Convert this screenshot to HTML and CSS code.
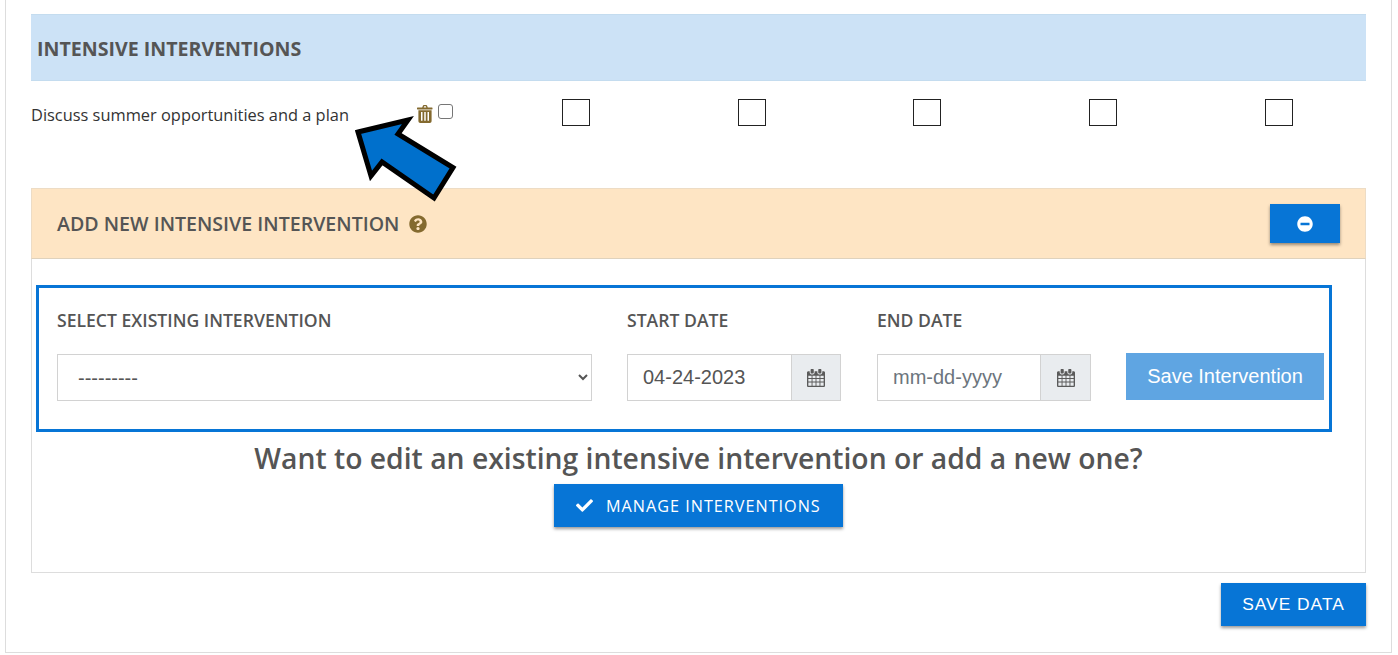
FILE: index.html
```html
<!DOCTYPE html>
<html lang="en">
<head>
    <meta charset="UTF-8">
    <meta name="viewport" content="width=device-width, initial-scale=1.0">
    <title>Intensive Interventions</title>
    <link rel="stylesheet" href="styles.css">
</head>
<body>
    <div class="page-card">
        <h2 class="section-title">INTENSIVE INTERVENTIONS</h2>

        <div class="row-item">
            <div class="row-name">Discuss summer opportunities and a plan</div>
            <div class="row-tools">
                <svg class="icon-trash" viewBox="0 0 16 18">
                    <path fill="#846a2f" fill-rule="evenodd" d="M5.2 2.4 6 .6C6.1.3 6.4 0 6.8 0h2.4c.4 0 .7.3.8.6l.8 1.8h4.2c.3 0 .5.2.5.5v1c0 .3-.2.5-.5.5H.5C.2 4.400 0 4.200 0 3.900v-1c0-.3.2-.5.5-.5zM6.700 2.400h2.600L8.900 1.300H7.100zM1.400 5.200h13.200v10.800c0 1.100-.8 2-1.800 2H3.200c-1 0-1.800-.9-1.800-2zM4 7v8.800h1.500V7zM7.250 7v8.800h1.500V7zM10.500 7v8.800H12V7z"/>
                </svg>
                <input type="checkbox" class="row-check">
            </div>
            <div class="row-boxes">
                <span class="box"></span>
                <span class="box"></span>
                <span class="box"></span>
                <span class="box"></span>
                <span class="box"></span>
            </div>
        </div>

        <div class="add-panel">
            <div class="add-header">
                <h3 class="add-title">ADD NEW INTENSIVE INTERVENTION
                    <svg class="icon-help" viewBox="0 0 512 512"><path fill="#846a2f" d="M504 256c0 136.997-111.043 248-248 248S8 392.997 8 256C8 119.083 119.043 8 256 8s248 111.083 248 248zM262.655 90c-54.497 0-89.255 22.957-116.549 63.758-3.536 5.286-2.353 12.415 2.715 16.258l34.699 26.31c5.205 3.947 12.621 3.008 16.665-2.122 17.864-22.658 30.113-35.797 57.303-35.797 20.429 0 45.698 13.148 45.698 32.958 0 14.976-12.363 22.667-32.534 33.976C247.128 238.528 216 254.941 216 296v4c0 6.627 5.373 12 12 12h56c6.627 0 12-5.373 12-12v-1.333c0-28.462 83.186-29.647 83.186-106.667 0-58.002-60.165-102-116.531-102zM256 338c-25.365 0-46 20.635-46 46 0 25.364 20.635 46 46 46s46-20.636 46-46c0-25.365-20.635-46-46-46z"/></svg>
                </h3>
                <button class="btn btn-collapse" aria-label="Collapse">
                    <svg class="icon-minus" viewBox="0 0 512 512"><path fill="#fff" d="M256 8C119 8 8 119 8 256s111 248 248 248 248-111 248-248S393 8 256 8zM124 296c-6.600 0-12-5.400-12-12v-56c0-6.600 5.400-12 12-12h264c6.600 0 12 5.400 12 12v56c0 6.600-5.400 12-12 12H124z"/></svg>
                </button>
            </div>

            <div class="add-body">
                <form class="add-form">
                    <div class="field field-select">
                        <label for="existing">SELECT EXISTING INTERVENTION</label>
                        <select id="existing" class="control">
                            <option>---------</option>
                        </select>
                    </div>
                    <div class="field field-start">
                        <label for="startDate">START DATE</label>
                        <div class="date-group">
                            <input type="text" id="startDate" class="control date-input" value="04-24-2023">
                            <span class="date-addon">
                                <svg class="icon-cal" viewBox="0 0 20 20"><path fill="#5a5a5a" fill-rule="evenodd" d="M5 0h1.500c.6 0 1 .5 1 1v3c0 .6-.4 1-1 1H5c-.6 0-1-.4-1-1V1c0-.5.4-1 1-1zm8.500 0H15c.6 0 1 .5 1 1v3c0 .6-.4 1-1 1h-1.500c-.6 0-1-.4-1-1V1c0-.5.4-1 1-1zM1.500 2.500H3V4c0 1.200.9 2 2 2h1.500c1.100 0 2-.8 2-2V2.500h3V4c0 1.200.9 2 2 2H15c1.100 0 2-.8 2-2V2.500h1.500c.8 0 1.500.7 1.500 1.500v14.500c0 .8-.7 1.500-1.500 1.500h-17C.7 20 0 19.300 0 18.500V4c0-.8.700-1.500 1.500-1.500zM1.500 7.500v2.600h3.600V7.500zm4.600 0v2.600h3.400V7.500zm4.400 0v2.600h3.400V7.500zm4.400 0v2.600h3.600V7.500zM1.500 11.100v2.800h3.600v-2.800zm4.600 0v2.800h3.400v-2.800zm4.400 0v2.800h3.400v-2.800zm4.400 0v2.800h3.600v-2.800zM1.500 14.900v3.600h3.600v-3.600zm4.600 0v3.600h3.400v-3.600zm4.400 0v3.600h3.400v-3.600zm4.400 0v3.600h3.600v-3.600z"/></svg>
                            </span>
                        </div>
                    </div>
                    <div class="field field-end">
                        <label for="endDate">END DATE</label>
                        <div class="date-group">
                            <input type="text" id="endDate" class="control date-input" placeholder="mm-dd-yyyy">
                            <span class="date-addon date-addon-end">
                                <svg class="icon-cal" viewBox="0 0 20 20"><path fill="#5a5a5a" fill-rule="evenodd" d="M5 0h1.500c.6 0 1 .5 1 1v3c0 .6-.4 1-1 1H5c-.6 0-1-.4-1-1V1c0-.5.4-1 1-1zm8.500 0H15c.6 0 1 .5 1 1v3c0 .6-.4 1-1 1h-1.500c-.6 0-1-.4-1-1V1c0-.5.4-1 1-1zM1.500 2.500H3V4c0 1.200.9 2 2 2h1.500c1.100 0 2-.8 2-2V2.500h3V4c0 1.200.9 2 2 2H15c1.100 0 2-.8 2-2V2.500h1.500c.8 0 1.500.7 1.500 1.500v14.500c0 .8-.7 1.500-1.500 1.500h-17C.7 20 0 19.300 0 18.500V4c0-.8.700-1.500 1.500-1.500zM1.500 7.500v2.600h3.600V7.500zm4.600 0v2.600h3.400V7.500zm4.400 0v2.600h3.400V7.500zm4.400 0v2.600h3.600V7.500zM1.500 11.100v2.800h3.600v-2.800zm4.600 0v2.800h3.400v-2.800zm4.400 0v2.800h3.400v-2.800zm4.400 0v2.800h3.600v-2.800zM1.500 14.900v3.600h3.600v-3.600zm4.600 0v3.600h3.400v-3.600zm4.400 0v3.600h3.400v-3.600zm4.400 0v3.600h3.600v-3.600z"/></svg>
                            </span>
                        </div>
                    </div>
                    <button type="button" class="save-intervention">Save Intervention</button>
                </form>

                <h2 class="manage-title">Want to edit an existing intensive intervention or add a new one?</h2>
                <div class="manage-wrap">
                    <button class="btn btn-manage">
                        <svg class="icon-check" viewBox="0 0 512 512"><path fill="#fff" d="M173.898 439.404l-166.400-166.400c-9.997-9.997-9.997-26.206 0-36.204l36.203-36.204c9.997-9.998 26.207-9.998 36.204 0L192 312.690 432.095 72.596c9.997-9.997 26.207-9.997 36.204 0l36.203 36.204c9.997 9.997 9.997 26.206 0 36.204l-294.400 294.401c-9.998 9.997-26.207 9.997-36.204-.001z"/></svg>
                        MANAGE INTERVENTIONS
                    </button>
                </div>
            </div>
        </div>

        <div class="page-actions">
            <button class="btn btn-save">SAVE DATA</button>
        </div>

        <!-- callout arrow on top of the screenshot -->
        <svg class="callout-arrow" viewBox="0 0 120 100">
            <polygon points="13,23 63,11 53,25 108,58.500 89,89 37,53 26,67" fill="#0070cc" stroke="#000" stroke-width="5" stroke-miterlimit="10"/>
        </svg>
    </div>
</body>
</html>
```

FILE: styles.css
```css
* {
    box-sizing: border-box;
}
body {
    margin: 0;
    background: #fff;
    color: #555;
    font-family: "Open Sans", "Noto Sans", sans-serif;
}
.page-card {
    position: relative;
    margin: 0 6px 0 5px;
    height: 653px;
    padding: 14px 25px 0;
    border: 1px solid #ddd;
    border-top: none;
}
.section-title {
    margin: 0;
    height: 67px;
    padding-left: 6px;
    padding-top: 1px;
    display: flex;
    align-items: center;
    background: #cce2f6;
    border: 1px solid #c4dcef;
    border-width: 1px 0;
    font-size: 19.6px;
    font-weight: 700;
    color: #555;
}
.row-item {
    display: flex;
    height: 107px;
    padding-top: 18px;
}
.row-name {
    width: 386px;
    padding-top: 4px;
    font-size: 16.4px;
    color: #333;
}
.row-tools {
    display: flex;
    align-items: flex-start;
    width: 145px;
    padding-top: 5px;
    gap: 5px;
}
.icon-trash {
    width: 16px;
    height: 18px;
    margin-top: 1px;
}
.row-check {
    width: 15px;
    height: 15px;
    margin: 0;
    appearance: none;
    border: 1px solid #767676;
    border-radius: 3px;
    background: #fff;
}
.row-boxes {
    display: flex;
    gap: 148px;
}
.box {
    display: block;
    width: 28px;
    height: 27px;
    border: 1px solid #222;
    margin-right: -0.3px;
}
.add-panel {
    height: 385px;
    border: 1px solid #ddd;
}
.add-header {
    display: flex;
    align-items: center;
    justify-content: space-between;
    height: 71px;
    padding: 0 25px 0 25px;
    margin: -1px -1px 0;
    background: #fee5c4;
    border: 1px solid #eddcc5;
    border-bottom-color: #dfd2bd;
}
.add-title {
    margin: 0;
    display: flex;
    align-items: center;
    gap: 10px;
    font-size: 19.6px;
    font-weight: 600;
    color: #555;
}
.icon-help {
    width: 18px;
    height: 18px;
}
.btn {
    border: none;
    border-radius: 0;
    background: #0775d6;
    color: #fff;
    box-shadow: 0 2px 3px rgba(0, 0, 0, 0.4);
    cursor: pointer;
}
.btn-collapse {
    width: 70px;
    height: 39px;
    display: flex;
    align-items: center;
    justify-content: center;
}
.icon-minus {
    width: 16px;
    height: 16px;
}
.add-body {
    padding: 26px 4px 0;
}
.add-form {
    display: flex;
    align-items: flex-start;
    width: 1296px;
    height: 147px;
    padding: 21px 0 0 18px;
    border: 3px solid #0775d6;
}
.field label {
    display: block;
    margin-bottom: 23px;
    height: 22px;
    line-height: 22px;
    font-size: 17.6px;
    font-weight: 600;
    color: #555;
}
.field-select {
    width: 535px;
    margin-right: 35px;
}
.field-start {
    width: 214px;
    margin-right: 36px;
}
.field-end {
    width: 214px;
    margin-right: 35px;
}
.control {
    height: 47px;
    border: 1px solid #d2d2d2;
    background: #fff;
    color: #555;
    font-family: "Liberation Sans", Arial, sans-serif;
    font-size: 20px;
    border-radius: 0;
    outline: none;
}
select.control {
    width: 100%;
    padding: 0 16px;
}
.date-group {
    display: flex;
}
.date-input {
    flex: 1;
    min-width: 0;
    padding: 0 15px;
    border-right: none;
}
.date-input::placeholder {
    color: #6c757d;
}
.date-addon {
    display: flex;
    align-items: center;
    justify-content: center;
    width: 50px;
    height: 47px;
    background: #e9ecef;
    border: 1px solid #d2d2d2;
}
.date-addon-end {
    width: 51px;
}
.icon-cal {
    width: 18px;
    height: 20px;
}
.save-intervention {
    width: 198px;
    height: 47px;
    margin-top: 44px;
    border: none;
    background: #5fa5e2;
    color: #fff;
    font-family: "Liberation Sans", Arial, sans-serif;
    font-size: 20px;
}
.manage-title {
    margin: 6px 0 0;
    text-align: center;
    font-size: 28.3px;
    line-height: 40px;
    font-weight: 600;
    color: #555;
}
.manage-wrap {
    display: flex;
    justify-content: center;
    margin-top: 6px;
}
.btn-manage {
    display: flex;
    align-items: center;
    gap: 13px;
    width: 289px;
    height: 43px;
    padding-left: 22px;
    font-family: "Open Sans", sans-serif;
    font-size: 16.200px;
    letter-spacing: 1px;
}
.icon-check {
    width: 17px;
    height: 17px;
}
.page-actions {
    display: flex;
    justify-content: flex-end;
    margin-top: 10px;
}
.btn-save {
    width: 145px;
    height: 43px;
    font-family: "Liberation Sans", Arial, sans-serif;
    font-size: 17.400px;
    letter-spacing: 1px;
}
.callout-arrow {
    position: absolute;
    left: 339px;
    top: 109px;
    width: 120px;
    height: 100px;
}
```
